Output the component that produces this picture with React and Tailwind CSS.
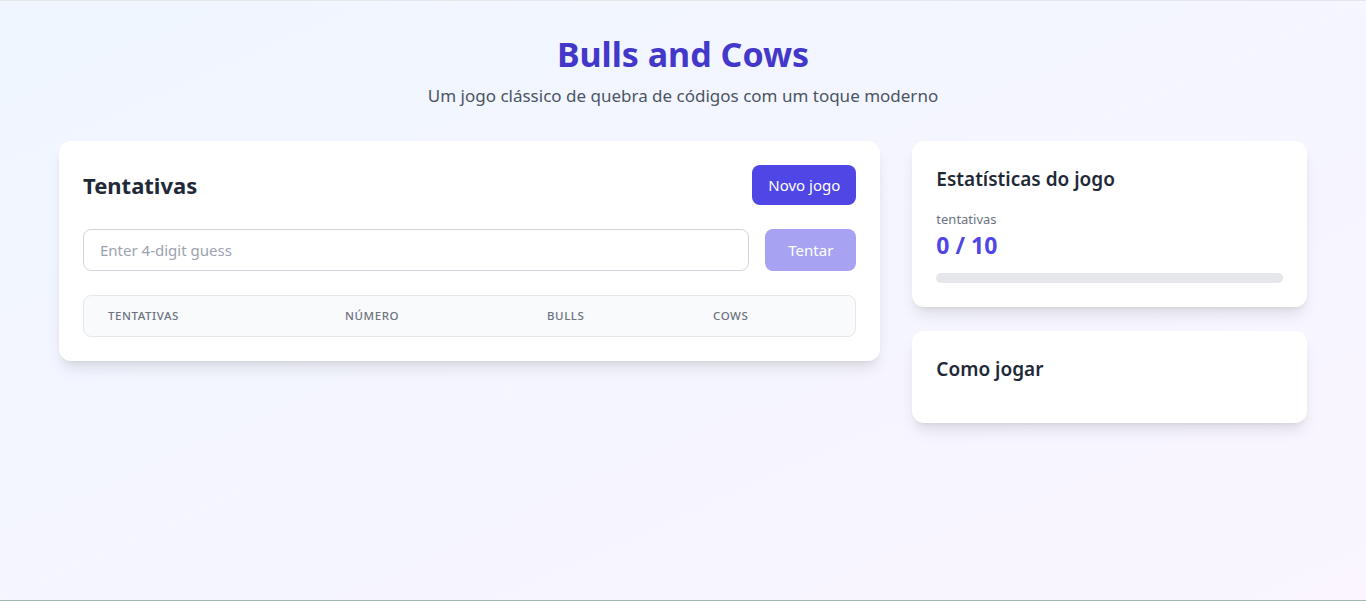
export default function App() {
  return (
    <div
      className="min-h-screen bg-gradient-to-br from-[#eff6ff] to-[#faf5ff] border-t border-gray-200 border-b border-b-[#a3b8b3]"
      style={{ fontFamily: '"Noto Sans", "Open Sans", sans-serif' }}
    >
      <div className="max-w-7xl mx-auto px-4 pt-[33px]">
        <header className="text-center mb-[31px]">
          <h1 className="text-[34px]/[40px] font-bold text-[#4338ca] mb-2">Bulls and Cows</h1>
          <p className="text-[17px]/[28px] text-[#4b5563]">Um jogo clássico de quebra de códigos com um toque moderno</p>
        </header>
        <div className="grid grid-cols-3 gap-8 items-start">
          <div className="col-span-2 bg-white rounded-xl shadow-lg p-6">
            <div className="flex items-center justify-between mb-6">
              <h2 className="text-[22px]/[32px] font-bold text-[#1f2937]">Tentativas</h2>
              <button className="bg-[#4f46e5] text-white px-4 py-2 rounded-lg text-[15px]/[24px]">Novo jogo</button>
            </div>
            <div className="flex gap-4 mb-6">
              <input
                className="flex-1 px-4 py-2 border border-[#d1d5db] rounded-lg text-[15px]/[24px] placeholder:text-[#9ca3af] outline-none"
                placeholder="Enter 4-digit guess"
              />
              <button className="bg-[#a7a2f2] text-white w-[91px] py-2 rounded-lg text-[15px]/[24px]">Tentar</button>
            </div>
            <div className="border border-[#e5e7eb] rounded-lg bg-[#f9fafb] flex text-[11.5px]/[16px] font-medium text-[#6b7280] uppercase tracking-wider">
              <div className="w-[237px] px-6 py-3">Tentativas</div>
              <div className="w-[202px] px-6 py-3">Número</div>
              <div className="w-[166px] px-6 py-3">Bulls</div>
              <div className="flex-1 px-6 py-3">Cows</div>
            </div>
          </div>
          <div className="flex flex-col gap-6">
            <div className="bg-white rounded-xl shadow-lg p-6">
              <h3 className="text-[19px]/[28px] font-semibold text-[#1f2937] mb-4">Estatísticas do jogo</h3>
              <p className="text-[13px]/[20px] text-[#6b7280]">tentativas</p>
              <p className="text-[23px]/[32px] font-bold text-[#4f46e5] mb-3">0 / 10</p>
              <div className="h-2.5 bg-[#e5e7eb] rounded-full"></div>
            </div>
            <div className="bg-white rounded-xl shadow-lg p-6">
              <h3 className="text-[19px]/[28px] font-semibold text-[#1f2937] mb-4">Como jogar</h3>
            </div>
          </div>
        </div>
      </div>
    </div>
  );
}
